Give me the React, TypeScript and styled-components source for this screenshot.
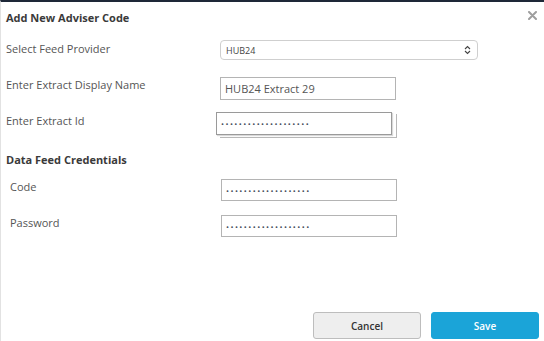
import React from "react";
import styled, { createGlobalStyle } from "styled-components";

const Global = createGlobalStyle`
  html, body { margin: 0; padding: 0; background: #fff; }
  body { font-family: "Open Sans", "Liberation Sans", sans-serif; }
  * { box-sizing: border-box; }
`;

const Modal = styled.div`
  width: 544px;
  height: 341px;
  border-top: 2px solid #1e2838;
  border-left: 1px solid #e2e2e2;
  background: #fff;
  display: flex;
  flex-direction: column;
  position: relative;
`;

const Header = styled.div`
  display: flex;
  justify-content: space-between;
  align-items: flex-start;
  padding: 9px 6px 0 5px;
  height: 38px;
`;

const Title = styled.h4`
  margin: 0;
  font-size: 11px;
  line-height: 14px;
  font-weight: 700;
  color: #3a3a3a;
`;

const Close = styled.button`
  border: 0;
  background: none;
  padding: 0;
  margin-top: -2px;
  width: 12px;
  height: 12px;
  display: flex;
  align-items: center;
  justify-content: center;
  cursor: pointer;
`;

const Form = styled.div`
  display: flex;
  flex-direction: column;
  padding-left: 5px;
`;

const Row = styled.div<{ $top: number }>`
  display: flex;
  align-items: flex-start;
  margin-top: ${(p) => p.$top}px;
`;

const Label = styled.label<{ $indent?: number; $pad?: number }>`
  width: 214px;
  padding-left: ${(p) => p.$indent ?? 0}px;
  padding-top: ${(p) => p.$pad ?? 0}px;
  font-size: 11px;
  line-height: 14px;
  color: #555;
`;

const SelectBox = styled.div`
  width: 258px;
  height: 20px;
  border: 1px solid #cfcfcf;
  border-radius: 4px;
  display: flex;
  align-items: center;
  justify-content: space-between;
  padding: 0 6px 0 5px;
  font-size: 9px;
  color: #444;
`;

const Input = styled.input<{ $w?: number; $h?: number; $shift?: number }>`
  width: ${(p) => p.$w ?? 176}px;
  height: ${(p) => p.$h ?? 22}px;
  margin-left: ${(p) => p.$shift ?? 0}px;
  border: 1px solid #b4b4b4;
  border-radius: 0;
  padding: 0 4px;
  font-family: "Open Sans", "Liberation Sans", sans-serif;
  font-size: 11px;
  color: #555;
  background: #fff;
  outline: none;
  &[type="password"] {
    font-size: 8px;
    letter-spacing: 1.45px;
    color: #4a5260;
  }
`;

const Ghosted = styled.div`
  position: relative;
  margin-left: -4px;
  &::after {
    content: "";
    position: absolute;
    left: 4px;
    top: 4px;
    width: 176px;
    height: 23px;
    border-right: 1px solid #b8b8b8;
    border-bottom: 1px solid #b8b8b8;
    z-index: 0;
  }
  & > input {
    position: relative;
    z-index: 1;
    border-color: #9a9a9a;
    box-shadow: 1px 1px 1px rgba(0,0,0,0.15);
  }
`;

const Footer = styled.div`
  margin-top: auto;
  display: flex;
  justify-content: flex-end;
  gap: 10px;
  padding: 0 5px 2px 0;
`;

const Button = styled.button<{ $primary?: boolean }>`
  width: 108px;
  height: 27px;
  border-radius: 3px;
  font-family: "Open Sans", "Liberation Sans", sans-serif;
  font-size: 10px;
  font-weight: 600;
  cursor: pointer;
  border: 1px solid ${(p) => (p.$primary ? "#1ba4d8" : "#bdbdbd")};
  background: ${(p) => (p.$primary ? "#1ba4d8" : "#eeeeee")};
  color: ${(p) => (p.$primary ? "#fff" : "#333")};
`;

const Chevrons = () => (
  <svg width="7" height="10" viewBox="0 0 7 10">
    <path d="M1 4 L3.5 1.5 L6 4 M1 6 L3.5 8.5 L6 6" fill="none" stroke="#444" strokeWidth="1.1" />
  </svg>
);

const XIcon = () => (
  <svg width="9" height="9" viewBox="0 0 9 9">
    <path d="M1 1 L8 8 M8 1 L1 8" stroke="#9e9e9e" strokeWidth="2" strokeLinecap="round" />
  </svg>
);

export default function App() {
  return (
    <>
      <Global />
      <Modal>
        <Header>
          <Title>Add New Adviser Code</Title>
          <Close aria-label="close">
            <XIcon />
          </Close>
        </Header>
        <Form>
          <Row $top={0}>
            <Label $pad={2}>Select Feed Provider</Label>
            <SelectBox>
              <span>HUB24</span>
              <Chevrons />
            </SelectBox>
          </Row>
          <Row $top={17}>
            <Label $pad={1}>Enter Extract Display Name</Label>
            <Input $w={176} $h={23} defaultValue="HUB24 Extract 29" />
          </Row>
          <Row $top={10}>
            <Label $pad={4}>Enter Extract Id</Label>
            <Ghosted>
              <Input $w={176} $h={23} type="password" defaultValue="xxxxxxxxxxxxxxxxxxxx" />
            </Ghosted>
          </Row>
          <Row $top={18}>
            <Title>Data Feed Credentials</Title>
          </Row>
          <Row $top={12}>
            <Label $indent={4} $pad={1}>Code</Label>
            <Input $shift={1} type="password" defaultValue="xxxxxxxxxxxxxxxxxxx" />
          </Row>
          <Row $top={14}>
            <Label $indent={4} $pad={1}>Password</Label>
            <Input $shift={1} type="password" defaultValue="xxxxxxxxxxxxxxxxxxx" />
          </Row>
        </Form>
        <Footer>
          <Button>Cancel</Button>
          <Button $primary>Save</Button>
        </Footer>
      </Modal>
    </>
  );
}
